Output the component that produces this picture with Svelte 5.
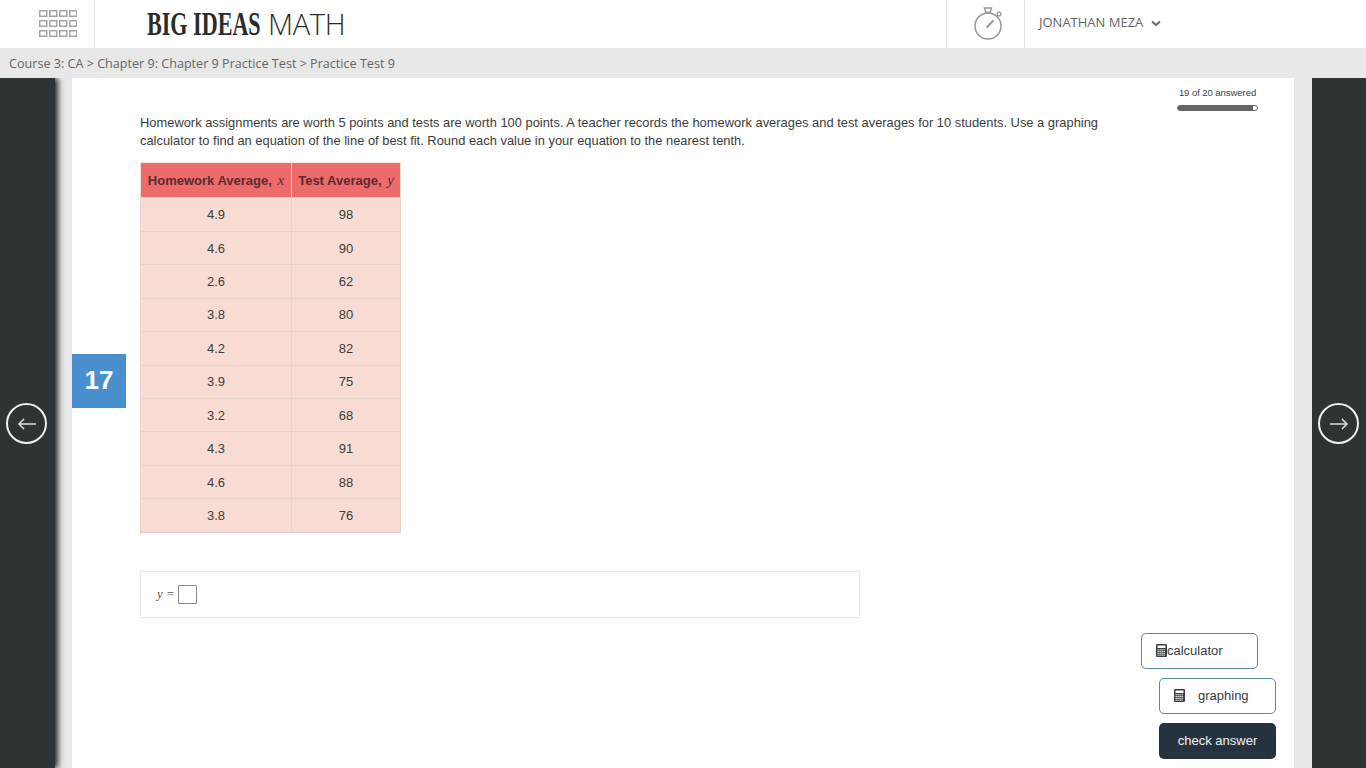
<script>
    const rows = [
        ["4.9", 98], ["4.6", 90], ["2.6", 62], ["3.8", 80], ["4.2", 82],
        ["3.9", 75], ["3.2", 68], ["4.3", 91], ["4.6", 88], ["3.8", 76],
    ];
    const gridCells = Array.from({ length: 12 }, (_, i) => i);
    const calcKeys = [];
    for (let r = 0; r < 4; r++) for (let c = 0; c < 4; c++) calcKeys.push([c, r]);
</script>

{#snippet calcIcon()}
    <svg class="calc" width="11" height="13" viewBox="0 0 11 13">
        <rect x="0" y="0" width="11" height="13" rx="1" fill="#3a3f44" />
        <rect x="1.5" y="1.5" width="8" height="2.5" fill="#fff" />
        {#each calcKeys as [c, r]}
            <rect x={1.5 + c * 2} y={5.2 + r * 1.8} width="1.3" height="1.1" fill="#fff" />
        {/each}
    </svg>
{/snippet}

<header class="topbar">
    <div class="apps">
        <svg width="38" height="27" viewBox="0 0 38 27">
            {#each gridCells as i}
                <rect
                    x={0.75 + (i % 4) * 10}
                    y={0.75 + Math.floor(i / 4) * 10}
                    width="7"
                    height="5.5"
                    fill="none"
                    stroke="#a5a5a5"
                    stroke-width="1.5"
                />
            {/each}
        </svg>
    </div>
    <div class="logo"><span class="big">BIG IDEAS</span><span class="math">MATH</span></div>
    <div class="timer">
        <svg width="34" height="36" viewBox="0 0 34 36">
            <circle cx="15" cy="20" r="13" fill="none" stroke="#969696" stroke-width="1.5" />
            <path d="M11.5 2h7l-1.2 4.2h-4.6z" fill="none" stroke="#969696" stroke-width="1.4" />
            <circle cx="26" cy="8" r="1.9" fill="none" stroke="#969696" stroke-width="1.3" />
            <path d="M23.5 10.5l1-1" stroke="#969696" stroke-width="1.3" />
            <path d="M13.5 21.5l7-7" stroke="#969696" stroke-width="1.8" />
        </svg>
    </div>
    <div class="user">
        JONATHAN MEZA
        <svg width="10" height="7" viewBox="0 0 10 7">
            <path d="M1 1.5l4 3.5 4-3.5" fill="none" stroke="#666" stroke-width="2" />
        </svg>
    </div>
</header>

<nav class="crumbs">Course 3: CA &gt; Chapter 9: Chapter 9 Practice Test &gt; Practice Test 9</nav>

<main class="stage">
    <aside class="rail left">
        <button class="arrow" aria-label="previous">
            <svg width="20" height="12" viewBox="0 0 20 12">
                <path d="M19 6H2M7 1L2 6l5 5" fill="none" stroke="#e0e0e0" stroke-width="1.5" />
            </svg>
        </button>
    </aside>

    <section class="sheet">
        <div class="badge">17</div>

        <div class="progress">
            <div class="progress-label">19 of 20 answered</div>
            <div class="progress-track"><div class="progress-fill" style="width: {(19 / 20) * 100}%"></div></div>
        </div>

        <p class="question">
            Homework assignments are worth 5 points and tests are worth 100 points. A teacher records the homework averages and test averages for 10 students. Use a graphing calculator to find an equation of the line of best fit. Round each value in your equation to the nearest tenth.
        </p>

        <table>
            <thead>
                <tr>
                    <th class="col-x">Homework Average, <i>x</i></th>
                    <th class="col-y">Test Average, <i>y</i></th>
                </tr>
            </thead>
            <tbody>
                {#each rows as [x, y]}
                    <tr><td>{x}</td><td>{y}</td></tr>
                {/each}
            </tbody>
        </table>

        <div class="answer">
            <i>y</i><span class="eq">=</span><span class="blank"></span>
        </div>

        <div class="actions">
            <button class="tool calculator">{@render calcIcon()}calculator</button>
            <button class="tool graphing">{@render calcIcon()}<span>graphing</span></button>
            <button class="check">check answer</button>
        </div>
    </section>

    <aside class="rail right">
        <button class="arrow" aria-label="next">
            <svg width="20" height="12" viewBox="0 0 20 12">
                <path d="M1 6h17M13 1l5 5-5 5" fill="none" stroke="#e0e0e0" stroke-width="1.5" />
            </svg>
        </button>
    </aside>
</main>

<style>
    :global(body) {
        margin: 0;
        background: #e8e8e8;
        overflow: hidden;
    }

    .topbar {
        height: 48px;
        display: flex;
        background: #fff;
        font-family: "Open Sans", sans-serif;
    }

    .apps {
        width: 95px;
        box-sizing: border-box;
        padding: 10px 0 0 39px;
        border-right: 1px solid #e6e6e6;
    }

    .apps svg,
    .timer svg {
        display: block;
    }

    .logo {
        width: 851px;
        box-sizing: border-box;
        padding-left: 52px;
        display: flex;
        align-items: center;
        gap: 8px;
        color: #2b2b2b;
        white-space: nowrap;
    }

    .big {
        font: bold 33px/48px "Liberation Serif", serif;
        display: inline-block;
        width: 113px;
        transform: scaleX(0.67);
        transform-origin: left center;
    }

    .math {
        font: 300 29px/48px "Open Sans", sans-serif;
        letter-spacing: -0.3px;
    }

    .timer {
        width: 79px;
        box-sizing: border-box;
        padding: 6px 0 0 26px;
        border-left: 1px solid #e6e6e6;
        border-right: 1px solid #e6e6e6;
    }

    .user {
        padding: 13px 0 0 14px;
        font-size: 13px;
        line-height: 18px;
        color: #666;
    }

    .user svg {
        margin-left: 4px;
    }

    .crumbs {
        height: 30px;
        box-sizing: border-box;
        padding: 7px 0 0 9px;
        font: 12.6px/18px "Open Sans", sans-serif;
        color: #666;
        background: #e8e8e8;
    }

    .stage {
        display: flex;
        height: 690px;
        overflow: hidden;
    }

    .rail {
        flex: none;
        box-sizing: border-box;
        padding-top: 325px;
        background: #2e3336;
    }

    .rail.left {
        width: 55px;
        margin-right: 17px;
        padding-left: 6px;
        box-shadow: 3px 0 6px rgba(0, 0, 0, 0.85);
    }

    .rail.right {
        width: 54px;
        margin-left: 18px;
        padding-left: 6px;
    }

    .arrow {
        width: 41px;
        height: 41px;
        padding: 0;
        display: flex;
        align-items: center;
        justify-content: center;
        background: none;
        border: 2px solid #f0f0f0;
        border-radius: 50%;
    }

    .sheet {
        position: relative;
        flex: none;
        width: 1222px;
        box-sizing: border-box;
        padding: 36px 0 0 68px;
        background: #fff;
        font-family: "Liberation Sans", Arial, sans-serif;
        color: #3c3c3c;
    }

    .badge {
        position: absolute;
        left: 0;
        top: 276px;
        width: 54px;
        height: 54px;
        background: #4a90cf;
        color: #fff;
        font: bold 26px/53px "Liberation Sans", sans-serif;
        text-align: center;
    }

    .progress {
        position: absolute;
        right: 36px;
        top: 9px;
        width: 81px;
    }

    .progress-label {
        font-size: 9.6px;
        line-height: 12px;
        letter-spacing: -0.1px;
        color: #444;
        text-align: center;
        white-space: nowrap;
    }

    .progress-track {
        margin-top: 6px;
        height: 6px;
        box-sizing: border-box;
        border: 1px solid #666;
        border-radius: 3px;
        background: #fff;
    }

    .progress-fill {
        height: 100%;
        background: #666;
    }

    .question {
        width: 975px;
        margin: 0;
        font-size: 12.9px;
        line-height: 18px;
    }

    table {
        margin-top: 12px;
        border-collapse: collapse;
        font-size: 13px;
        table-layout: fixed;
        width: 261px;
    }

    th {
        height: 34.4px;
        padding: 0;
        background: #ee6b6b;
        color: #5a2a30;
        font-weight: bold;
        border: 1px solid #f3d9d3;
        border-top-color: #f6e4e0;
        white-space: nowrap;
    }

    th i {
        font: italic 15px "Liberation Serif", serif;
        margin-left: 2px;
    }

    .col-x {
        width: 150px;
    }

    td {
        height: 32.45px;
        padding: 0;
        text-align: center;
        background: #f8dcd3;
        border: 1px solid #e5d2cb;
    }

    .answer {
        width: 720px;
        height: 47px;
        box-sizing: border-box;
        margin-top: 38px;
        padding-left: 16px;
        display: flex;
        align-items: center;
        border: 1px solid #ebebeb;
        font: 13px "Liberation Serif", serif;
        color: #555;
    }

    .eq {
        margin: 0 4px 0 4px;
    }

    .blank {
        width: 19px;
        height: 19px;
        box-sizing: border-box;
        border: 1px solid #888;
        border-radius: 1px;
    }

    .actions {
        position: absolute;
        top: 555px;
        left: 1069px;
        width: 135px;
        display: flex;
        flex-direction: column;
        gap: 9px;
        font-family: "Liberation Sans", Arial, sans-serif;
    }

    button.tool,
    button.check {
        box-sizing: border-box;
        width: 117px;
        height: 36px;
        font: 13px "Liberation Sans", Arial, sans-serif;
        border-radius: 5px;
        text-align: left;
    }

    .tool {
        display: flex;
        align-items: center;
        background: #fff;
        color: #3c3c3c;
        border: 1px solid #5a8a9c;
    }

    .calc {
        flex: none;
    }

    .calculator {
        padding: 0 0 2px 14px;
    }

    .graphing {
        align-self: flex-end;
        padding: 0 0 2px 14px;
    }

    .graphing span {
        margin-left: 13px;
    }

    button.check {
        align-self: flex-end;
        padding: 0 0 2px;
        text-align: center;
        background: #26323f;
        color: #f2f2f2;
        border: none;
    }
</style>
